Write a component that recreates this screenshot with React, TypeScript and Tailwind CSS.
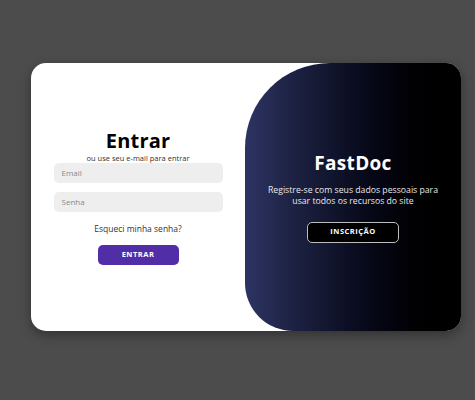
import React from "react";

export default function App() {
  const font = { fontFamily: '"Open Sans", "Liberation Sans", sans-serif' };
  return (
    <div className="w-[475px] h-[400px] bg-[#4c4c4c] flex items-start pt-[63px] pl-[31px]" style={font}>
      <div className="w-[430px] h-[268px] bg-white rounded-[15px] shadow-[0_4px_12px_rgba(0,0,0,0.35)] flex overflow-hidden">
        <div className="w-[214px] h-full flex flex-col items-center pt-[64px]">
          <h1 className="text-[20px] leading-[27px] font-bold text-black tracking-[0.2px]">Entrar</h1>
          <p className="text-[7.5px] leading-[8px] text-[#333]">ou use seu e-mail para entrar</p>
          <div className="mt-[1px] w-[169px] h-[20px] bg-[#eeeeee] rounded-[5px] flex items-center px-[8px] text-[8px] text-[#8a8a8a]">Email</div>
          <div className="mt-[9px] w-[169px] h-[20px] bg-[#eeeeee] rounded-[5px] flex items-center px-[8px] text-[8px] text-[#8a8a8a]">Senha</div>
          <p className="mt-[11px] text-[8.5px] leading-[12px] text-[#333]">Esqueci minha senha?</p>
          <button className="mt-[10px] w-[81px] h-[20px] bg-[#512da8] rounded-[5px] text-white text-[7.5px] font-bold tracking-[0.5px]">ENTRAR</button>
        </div>
        <div className="w-[216px] h-full rounded-tl-[85px] rounded-bl-[48px] bg-gradient-to-r from-[#2d3462] to-[#000000] flex flex-col items-center justify-center text-white">
          <h2 className="text-[19px] leading-[22px] font-bold tracking-[0.3px]">FastDoc</h2>
          <p className="mt-[11px] text-[8.7px] leading-[11px] text-center text-[#e8e8e8]">
            Registre-se com seus dados pessoais para
            <br />
            usar todos os recursos do site
          </p>
          <button className="mt-[15px] w-[92px] h-[21px] bg-black border border-[#bdbdbd] rounded-[5px] text-white text-[7.5px] font-bold tracking-[0.5px]">INSCRIÇÃO</button>
        </div>
      </div>
    </div>
  );
}
